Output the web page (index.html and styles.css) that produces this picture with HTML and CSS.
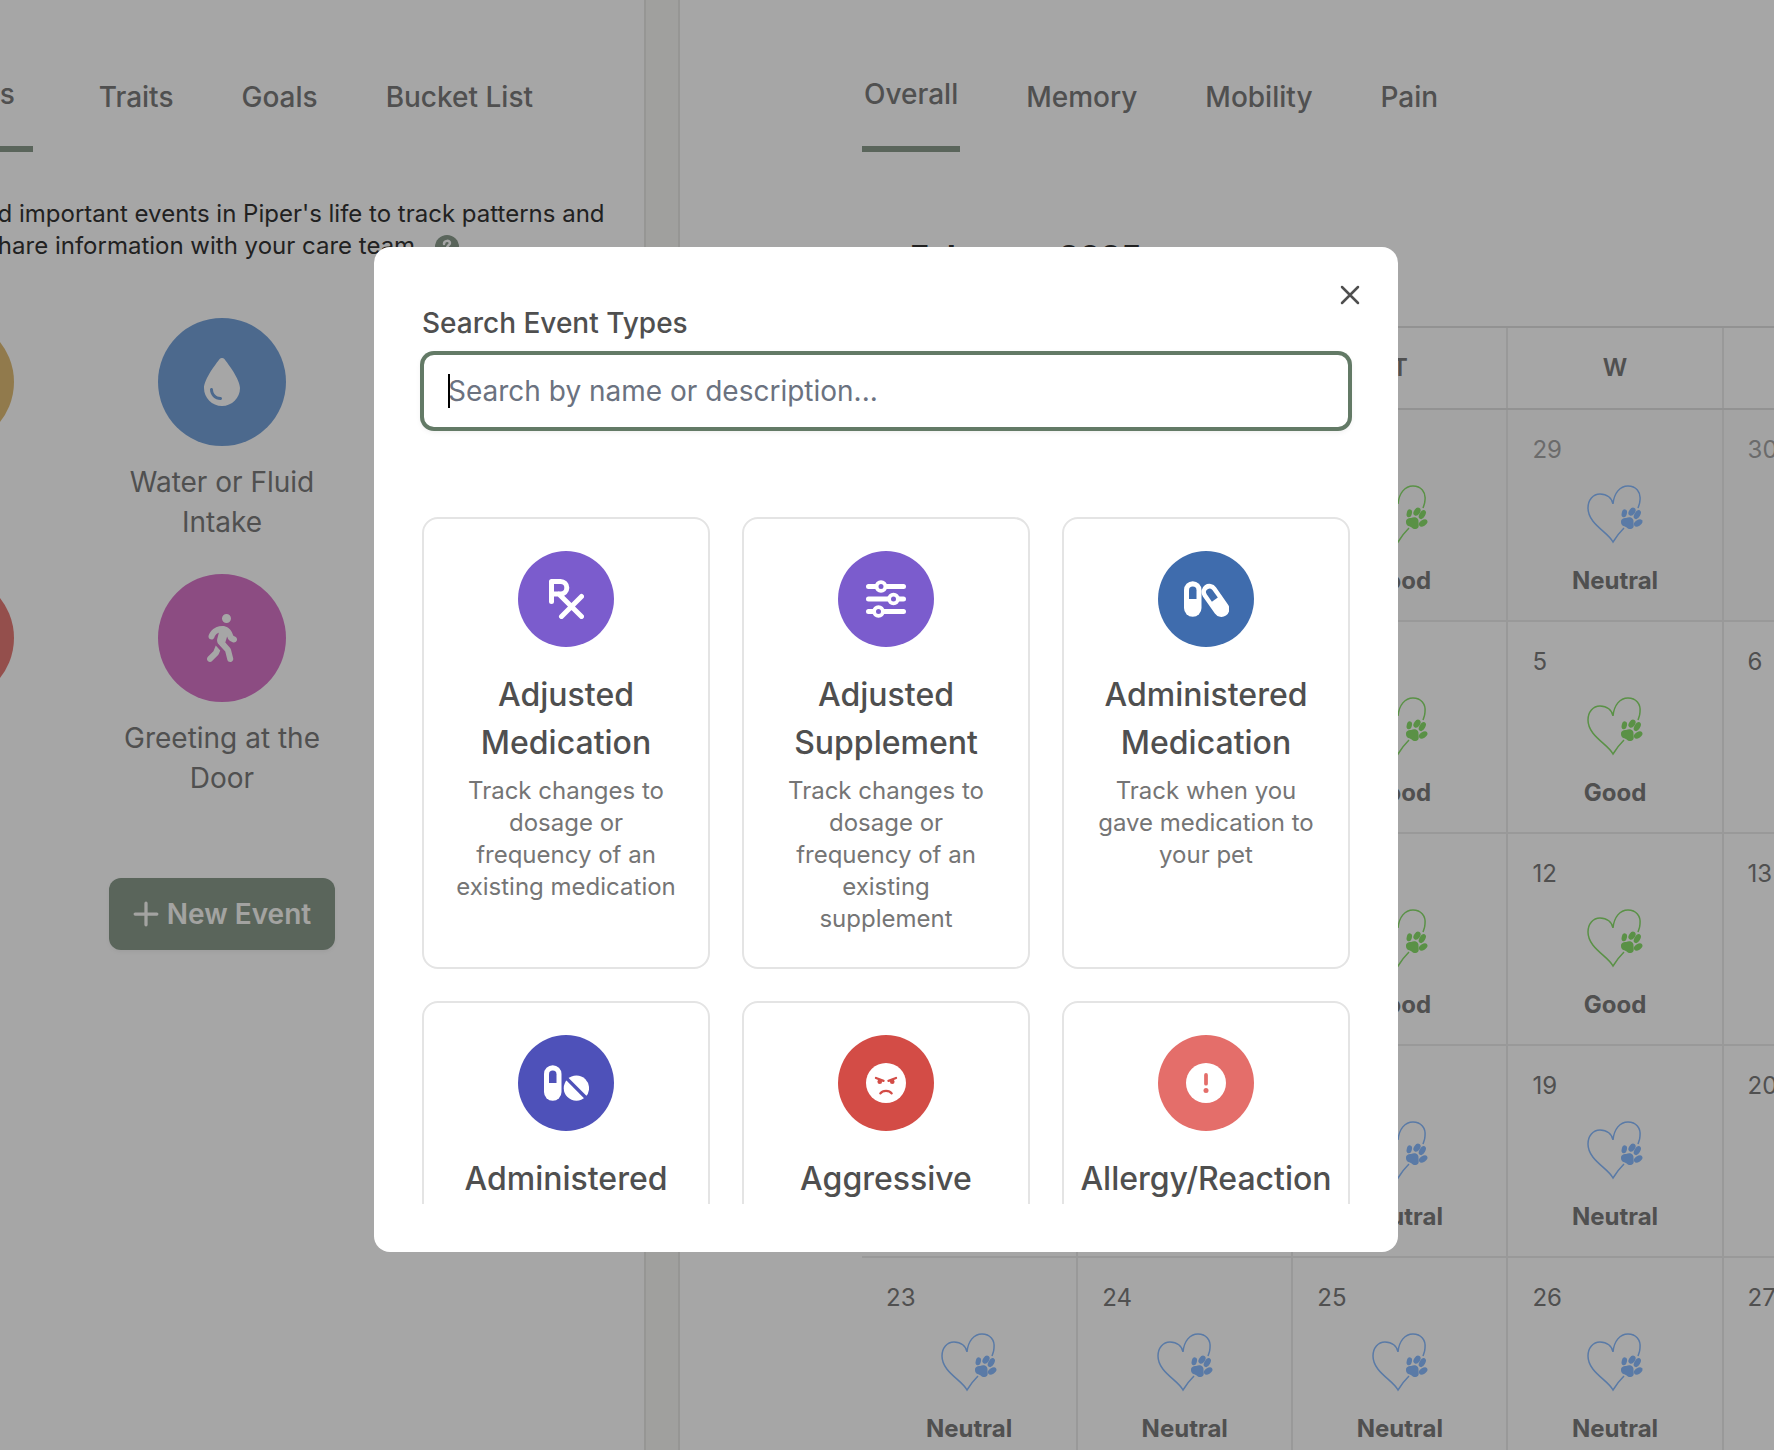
FILE: index.html
```html
<!DOCTYPE html>
<html lang="en">
<head>
    <meta charset="UTF-8">
    <meta name="viewport" content="width=device-width, initial-scale=1.0">
    <title>Piper's Events</title>
    <link rel="stylesheet" href="styles.css">
</head>
<body>
    <svg class="sprite" aria-hidden="true">
        <symbol id="heart" viewBox="0 0 64 64">
            <path class="heart-line" d="M41 46C37 50 33 55 30 60C25 50 5 42 5 26C5 18 10 12 17 12C24 12 29 16 30 22C31 11 37 4 45 4C53 4 58 10 57 18C57 21 56 23 55 26"/>
            <ellipse cx="41.3" cy="31.3" rx="2.6" ry="4" transform="rotate(15 41.3 31.3)"/>
            <ellipse cx="49" cy="29.7" rx="3" ry="4.4" transform="rotate(35 49 29.7)"/>
            <ellipse cx="54.3" cy="32.6" rx="2.9" ry="4.9" transform="rotate(30 54.3 32.6)"/>
            <ellipse cx="55.2" cy="41" rx="2.9" ry="4.7" transform="rotate(55 55.2 41)"/>
            <path d="M43 36C47 34 51 36 50.500 40C50.500 42 51 43 50.500 45C49 48 45 47.500 43 45C41 44 38 44 38 40C38 37 40 36 43 36Z"/>
        </symbol>
    </svg>

    <div class="page">
        <section class="pane pane-events">
            <nav class="tabs">
                <a href="#events" class="tab active">Favorites</a>
                <a href="#traits" class="tab">Traits</a>
                <a href="#goals" class="tab">Goals</a>
                <a href="#bucket" class="tab">Bucket List</a>
            </nav>
            <p class="intro">
                Track daily and important events in Piper's life to track patterns and<br>
                share information with your care team.
                <svg class="help" viewBox="0 0 24 24"><circle cx="12" cy="12" r="12" fill="#8a9b8c"/><path d="M9 9c0-4 6-4 6-1 0 2-3 2-3 5M12 17v.1" fill="none" stroke="#fff" stroke-width="2.500" stroke-linecap="round"/></svg>
            </p>
            <div class="favorites">
                <button class="favorite"><span class="circle yellow"></span>Meal</button>
                <button class="favorite">
                    <span class="circle blue">
                        <svg viewBox="0 0 384 512"><path d="M192 512C86 512 0 426 0 320C0 228.8 130.2 57.7 166.6 11.7C172.6 4.2 181.5 0 191.1 0h1.8c9.6 0 18.5 4.2 24.5 11.7C253.8 57.7 384 228.8 384 320c0 106-86 192-192 192zM96 336c0-8.8-7.2-16-16-16s-16 7.2-16 16c0 61.9 50.1 112 112 112c8.8 0 16-7.2 16-16s-7.2-16-16-16c-44.2 0-80-35.8-80-80z"/></svg>
                    </span>
                    Water or Fluid Intake
                </button>
                <button class="favorite"><span class="circle yellow"></span>Play</button>
                <button class="favorite"><span class="circle red"></span>Pain</button>
                <button class="favorite">
                    <span class="circle pink">
                        <svg viewBox="0 0 320 512"><path d="M160 48a48 48 0 1 1 96 0 48 48 0 1 1 -96 0zM126.5 199.3c-1 .4-1.9 .8-2.9 1.2l-8 3.5c-16.4 7.3-29 21.2-34.7 38.2l-2.6 7.8c-5.6 16.8-23.7 25.8-40.5 20.2s-25.8-23.7-20.2-40.5l2.6-7.8c11.4-34.1 36.6-61.9 69.4-76.5l8-3.5c20.8-9.2 43.3-14 66.1-14c44.6 0 84.8 26.8 101.9 67.9L281 232.7l21.4 10.7c15.8 7.9 22.2 27.1 14.3 42.9s-27.1 22.2-42.9 14.3L247 287.3c-10.3-5.2-18.4-13.8-22.8-24.5l-9.6-23-19.3 65.5 49.5 54c5.4 5.9 9.2 13 11.2 20.8l23 92.1c4.3 17.1-6.1 34.5-23.3 38.8s-34.5-6.1-38.8-23.3l-22-88.1-70.7-77.1c-14.8-16.1-20.3-38.6-14.7-59.7l16.9-63.5zM68.7 398l25-62.4c2.1 3 4.5 5.8 7 8.6l40.7 44.4-14.5 36.2c-2.4 6-6 11.5-10.6 16.1L54.6 502.6c-12.5 12.5-32.8 12.5-45.3 0s-12.5-32.8 0-45.3L68.7 398z"/></svg>
                    </span>
                    Greeting at the Door
                </button>
                <button class="favorite"><span class="circle blue"></span>Walk</button>
            </div>
            <button class="new-event">
                <svg viewBox="0 0 24 24"><path d="M12 2v20M2 12h20"/></svg>
                New Event
            </button>
        </section>

        <section class="pane pane-calendar">
            <nav class="tabs">
                <a href="#overall" class="tab active">Overall</a>
                <a href="#memory" class="tab">Memory</a>
                <a href="#mobility" class="tab">Mobility</a>
                <a href="#pain" class="tab">Pain</a>
            </nav>
            <h2 class="month">February 2025</h2>
            <table class="calendar">
                <thead>
                    <tr><th>S</th><th>M</th><th>T</th><th>W</th><th>T</th><th>F</th><th>S</th></tr>
                </thead>
                <tbody id="days"></tbody>
            </table>
        </section>
    </div>

    <div class="overlay">
        <div class="modal" role="dialog" aria-label="Event types">
            <button class="close" aria-label="Close">
                <svg viewBox="0 0 20 20"><path d="M2 2l16 16M18 2L2 18"/></svg>
            </button>
            <label for="search">Search Event Types</label>
            <div class="search-box">
                <input type="text" id="search" placeholder="Search by name or description...">
                <span class="caret"></span>
            </div>
            <div class="cards">
                <button class="card">
                    <span class="badge purple">
                        <svg viewBox="0 0 448 512">
                            <path class="line" d="M32 288V32h116a80 80 0 0 1 0 160H32M126 192L416 480M416 224L160 480"/>
                        </svg>
                    </span>
                    <span class="name">Adjusted Medication</span>
                    <span class="desc">Track changes to dosage or frequency of an existing medication</span>
                </button>
                <button class="card">
                    <span class="badge purple">
                        <svg viewBox="0 0 512 512">
                            <path class="line" d="M32 96h90M262 96h218M32 256h248M424 256h56M32 416h60M232 416h248"/>
                            <circle class="ring" cx="192" cy="96" r="56"/>
                            <circle class="ring" cx="352" cy="256" r="56"/>
                            <circle class="ring" cx="160" cy="416" r="56"/>
                        </svg>
                    </span>
                    <span class="name">Adjusted Supplement</span>
                    <span class="desc">Track changes to dosage or frequency of an existing supplement</span>
                </button>
                <button class="card">
                    <span class="badge navy">
                        <svg viewBox="0 0 576 512">
                            <rect x="0" y="28" width="224" height="456" rx="112"/>
                            <path class="cut" d="M64 256V144a48 48 0 0 1 96 0V256Z"/>
                            <g transform="translate(402 274) rotate(-35)">
                                <rect x="-102" y="-236" width="204" height="472" rx="102"/>
                                <path class="cut" d="M-46 -12V-128a46 46 0 0 1 92 0V-12Z"/>
                            </g>
                        </svg>
                    </span>
                    <span class="name">Administered Medication</span>
                    <span class="desc">Track when you gave medication to your pet</span>
                </button>
                <button class="card">
                    <span class="badge indigo">
                        <svg viewBox="0 0 576 512">
                            <rect x="0" y="28" width="224" height="456" rx="112"/>
                            <path class="cut" d="M64 256V144a48 48 0 0 1 96 0V256Z"/>
                            <circle cx="415" cy="322" r="162"/>
                            <path class="cut-line" d="M290 197L540 447"/>
                        </svg>
                    </span>
                    <span class="name">Administered Supplement</span>
                    <span class="desc">Track when you gave a supplement to your pet</span>
                </button>
                <button class="card">
                    <span class="badge red-dark">
                        <svg viewBox="0 0 512 512">
                            <circle cx="256" cy="256" r="256"/>
                            <path class="feature" d="M128 192l96 36M384 192l-96 36M184 388c30-42 114-42 144 0"/>
                            <circle class="cut" cx="176" cy="240" r="30"/>
                            <circle class="cut" cx="336" cy="240" r="30"/>
                        </svg>
                    </span>
                    <span class="name">Aggressive Behavior</span>
                    <span class="desc">Track aggression toward people or pets</span>
                </button>
                <button class="card">
                    <span class="badge coral">
                        <svg viewBox="0 0 512 512">
                            <circle cx="256" cy="256" r="256"/>
                            <rect class="cut" x="232" y="128" width="48" height="160" rx="24"/>
                            <circle class="cut" cx="256" cy="352" r="32"/>
                        </svg>
                    </span>
                    <span class="name">Allergy/Reaction</span>
                    <span class="desc">Track allergic reactions</span>
                </button>
            </div>
        </div>
    </div>

    <script>
        const moods = [
            ['Good', 'Good', 'Good', 'Neutral', '', '', ''],
            ['Good', 'Good', 'Good', 'Good', '', '', ''],
            ['Good', 'Good', 'Good', 'Good', '', '', ''],
            ['Neutral', 'Neutral', 'Neutral', 'Neutral', '', '', ''],
            ['Neutral', 'Neutral', 'Neutral', 'Neutral', '', '', '']
        ];
        const body = document.getElementById('days');
        const date = new Date(2025, 0, 26);

        moods.forEach(week => {
            const row = body.insertRow();
            week.forEach(mood => {
                const cell = row.insertCell();
                if (date.getMonth() !== 1) {
                    cell.className = 'outside';
                }
                cell.innerHTML = `<div class="day">${date.getDate()}</div>`;
                if (mood) {
                    cell.innerHTML += `<div class="mood ${mood.toLowerCase()}"><svg><use href="#heart"/></svg>${mood}</div>`;
                }
                date.setDate(date.getDate() + 1);
            });
        });
    </script>
</body>
</html>
```
FILE: styles.css
```css
* {
    box-sizing: border-box;
}

body {
    margin: 0;
    height: 100vh;
    overflow: hidden;
    font-family: 'Inter', sans-serif;
    font-size: 28px;
    line-height: 40px;
    color: #7b7b7b;
    background: #f6f6f3;
}

button {
    font: inherit;
    color: inherit;
    border: none;
    background: none;
    padding: 0;
    cursor: pointer;
}

.sprite {
    display: none;
}

/* Page behind the dialog */
.page {
    display: flex;
    gap: 32px;
    height: 100%;
    margin-left: -200px;
}

.pane {
    background: #fff;
    padding-top: 42px;
    overflow: hidden;
}

.pane-events {
    flex: none;
    width: 846px;
    border-right: 2px solid #e7e7e4;
    display: flex;
    flex-direction: column;
    align-items: center;
}

.pane-calendar {
    flex: 1;
    border-left: 2px solid #e7e7e4;
    padding-left: 182px;
}

.tabs {
    display: flex;
    gap: 64px;
    height: 110px;
}

.pane-events .tabs {
    align-self: flex-end;
    margin-right: 109px;
}

.tab {
    display: flex;
    align-items: center;
    padding: 0 2px;
    font-weight: 500;
    color: inherit;
    text-decoration: none;
    white-space: nowrap;
}

.tab.active {
    border-bottom: 6px solid #8a9b8c;
}

.pane-events .tab.active {
    padding: 0 18px;
}

.intro {
    margin: 46px 0 56px;
    font-size: 24px;
    line-height: 32px;
    color: #343434;
    text-align: center;
    white-space: nowrap;
}

.help {
    width: 24px;
    height: 24px;
    margin-left: 6px;
    vertical-align: middle;
}

.favorites {
    display: grid;
    grid-template-columns: repeat(3, 240px);
    gap: 32px;
}

.favorite {
    display: flex;
    flex-direction: column;
    align-items: center;
    gap: 16px;
    padding: 0 16px;
}

.circle {
    display: flex;
    align-items: center;
    justify-content: center;
    width: 128px;
    height: 128px;
    border-radius: 50%;
}

.circle svg {
    height: 48px;
    fill: #fff;
}

.yellow { background: #dfbc76; }
.blue { background: #76a2d9; }
.red { background: #e47a76; }
.pink { background: #d776c8; }

.new-event {
    display: flex;
    align-items: center;
    gap: 8px;
    margin-top: 80px;
    padding: 16px 24px;
    border-radius: 12px;
    font-weight: 600;
    color: #fafaf7;
    background: #8a9b8c;
    box-shadow: 0 2px 4px rgba(0, 0, 0, 0.05);
}

.new-event svg {
    width: 26px;
    height: 26px;
    fill: none;
    stroke: #fafaf7;
    stroke-width: 3;
    stroke-linecap: round;
}

/* Calendar */
.month {
    margin: 86px 0 48px 48px;
    font-size: 32px;
    font-weight: 700;
    line-height: 40px;
    color: #343434;
}

.calendar {
    width: 1506px;
    table-layout: fixed;
    border-collapse: collapse;
    font-size: 24px;
    line-height: 32px;
}

.calendar th {
    padding: 24px 0;
    height: 82px;
    font-weight: 600;
    border-top: 2px solid #e0e0e0;
    border-bottom: 2px solid #e0e0e0;
}

.calendar td {
    height: 212px;
    padding: 24px 24px 22px;
    vertical-align: top;
    border-bottom: 2px solid #ebebeb;
}

.calendar th + th,
.calendar td + td {
    border-left: 2px solid #ebebeb;
}

.calendar .outside {
    background: #fbfbfb;
}

.outside .day {
    color: #a5a5a5;
}

.mood {
    display: flex;
    flex-direction: column;
    align-items: center;
    gap: 19px;
    margin-top: 16px;
    font-weight: 700;
}

.mood svg {
    width: 64px;
    height: 64px;
    fill: currentColor;
}

.mood.good svg { color: #8adf6c; }
.mood.neutral svg { color: #8abcff; }

.heart-line {
    fill: none;
    stroke: currentColor;
    stroke-width: 1.5;
}

/* Dialog */
.overlay {
    position: fixed;
    inset: 0;
    display: flex;
    justify-content: center;
    padding: 247px 2px 198px 0;
    background: rgba(0, 0, 0, 0.35);
}

.modal {
    position: relative;
    display: flex;
    flex-direction: column;
    width: 1024px;
    padding: 56px 48px 48px;
    border-radius: 16px;
    color: #4f4f4f;
    background: #fff;
}

.close {
    position: absolute;
    top: 36px;
    right: 36px;
    width: 24px;
    height: 24px;
    display: flex;
    align-items: center;
    justify-content: center;
}

.close svg {
    width: 20px;
    height: 20px;
    fill: none;
    stroke: #4f4f4f;
    stroke-width: 2.5;
    stroke-linecap: round;
}

label {
    margin-bottom: 10px;
    font-weight: 500;
}

.search-box {
    position: relative;
    margin-bottom: 88px;
}

.search-box input {
    display: block;
    width: 100%;
    height: 76px;
    padding: 0 24px;
    border: 2px solid #637a66;
    border-radius: 12px;
    outline: none;
    font: inherit;
    color: inherit;
    background: #fff;
    box-shadow: 0 0 0 2px #637a66, 0 2px 6px rgba(0, 0, 0, 0.1);
}

.search-box input::placeholder {
    color: #6b7280;
}

.caret {
    position: absolute;
    top: 21px;
    left: 26px;
    width: 2px;
    height: 34px;
    background: #000;
}

.cards {
    flex: 1;
    min-height: 0;
    display: grid;
    grid-template-columns: repeat(3, 1fr);
    grid-auto-rows: max-content;
    gap: 32px;
    overflow: hidden;
}

.card {
    display: flex;
    flex-direction: column;
    align-items: center;
    padding: 32px 14px;
    border: 2px solid #e4e4e4;
    border-radius: 16px;
}

.badge {
    display: flex;
    align-items: center;
    justify-content: center;
    width: 96px;
    height: 96px;
    margin-bottom: 24px;
    border-radius: 50%;
    background: currentColor;
}

.badge.purple { color: #7b5ccd; }
.badge.navy { color: #3f6cad; }
.badge.indigo { color: #4e51b9; }
.badge.red-dark { color: #d34c46; }
.badge.coral { color: #e46e6a; }

.badge svg {
    height: 40px;
    fill: #fff;
}

.badge .line {
    fill: none;
    stroke: #fff;
    stroke-width: 64;
    stroke-linecap: round;
    stroke-linejoin: round;
}

.badge .ring {
    fill: currentColor;
    stroke: #fff;
    stroke-width: 48;
}

.badge .cut {
    fill: currentColor;
}

.badge .cut-line,
.badge .feature {
    fill: none;
    stroke: currentColor;
    stroke-width: 44;
}

.badge .feature {
    stroke-width: 30;
    stroke-linecap: round;
}

.name {
    font-size: 32px;
    font-weight: 500;
    line-height: 48px;
}

.desc {
    margin-top: 8px;
    padding: 0 18px;
    font-size: 24px;
    line-height: 32px;
    color: #757575;
}
```
